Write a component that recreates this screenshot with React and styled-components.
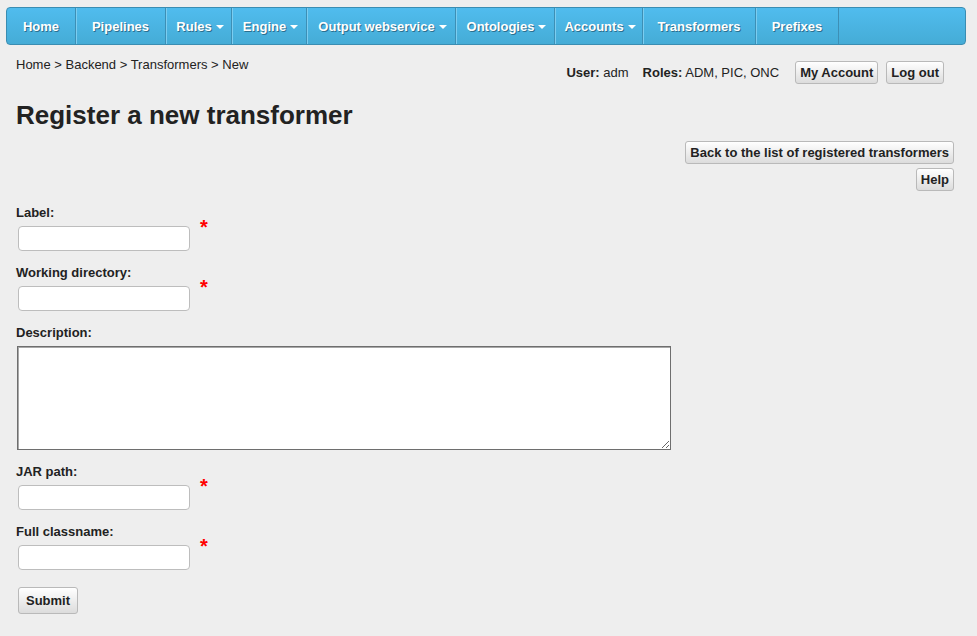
import styled, { createGlobalStyle } from 'styled-components';

const GlobalStyle = createGlobalStyle`
  body {
    margin: 0;
    background: #eeeeee;
    font-family: 'Liberation Sans', Arial, sans-serif;
    color: #222;
  }
`;

const NavBar = styled.nav`
  display: flex;
  height: 38px;
  margin: 7px 11px 0 6px;
  box-sizing: border-box;
  border: 1px solid #3a8db2;
  border-radius: 4px;
  background: linear-gradient(#50bcee, #45acd6);
  overflow: hidden;
`;

const NavItem = styled.div`
  display: flex;
  align-items: center;
  justify-content: center;
  gap: 4px;
  width: ${(p) => p.$w}px;
  box-sizing: border-box;
  padding-left: ${(p) => (p.$menu ? 3 : 0)}px;
  border-right: 1px solid #3d8fb5;
  box-shadow: inset 1px 0 0 #7ccdf0;
  font-size: 13px;
  font-weight: bold;
  color: #fff;
  text-shadow: 1px 1px 0 #2c6f8e;
  white-space: nowrap;
  &:first-child {
    box-shadow: none;
  }
`;

const Caret = styled.span`
  width: 0;
  height: 0;
  margin-top: 2px;
  border-left: 4px solid transparent;
  border-right: 4px solid transparent;
  border-top: 4px solid #fff;
`;

const Page = styled.div`
  padding: 0 23px 20px 16px;
`;

const TopRow = styled.div`
  display: flex;
  justify-content: space-between;
  align-items: flex-start;
  margin-top: 11px;
`;

const Breadcrumb = styled.div`
  padding-top: 1px;
  font-size: 13px;
  line-height: 15px;
`;

const UserBox = styled.div`
  display: flex;
  align-items: center;
  margin: 5px 10px 0 0;
  font-size: 13px;
`;

const Info = styled.span`
  margin-right: ${(p) => p.$gap}px;
  b {
    font-weight: bold;
  }
`;

const Button = styled.button`
  height: ${(p) => p.$h || 23}px;
  padding: 0 ${(p) => p.$pad || 4}px;
  margin-left: ${(p) => p.$ml || 0}px;
  margin-top: ${(p) => p.$mt || 0}px;
  box-sizing: border-box;
  border: 1px solid #b9b9b9;
  border-radius: 3px;
  background: linear-gradient(#ffffff, #dcdcdc);
  font-family: 'Liberation Sans', Arial, sans-serif;
  font-size: 13px;
  font-weight: bold;
  color: #222;
  cursor: pointer;
`;

const Title = styled.h1`
  margin: 17px 0 0;
  font-size: 26px;
  line-height: 28px;
  font-weight: bold;
`;

const Actions = styled.div`
  display: flex;
  flex-direction: column;
  align-items: flex-end;
  gap: 4px;
  margin-top: 12px;
`;

const Form = styled.form`
  margin-top: 14px;
`;

const Field = styled.div`
  margin-bottom: 14px;
`;

const Label = styled.label`
  display: block;
  margin-bottom: 6px;
  font-size: 13px;
  line-height: 15px;
  font-weight: bold;
`;

const InputRow = styled.div`
  display: flex;
  align-items: flex-start;
`;

const TextInput = styled.input`
  width: 172px;
  height: 25px;
  margin-left: 2px;
  box-sizing: border-box;
  border: 1px solid #bdbdbd;
  border-radius: 4px;
  background: #fff;
  outline: none;
`;

const Star = styled.span`
  margin: -7px 0 0 10px;
  color: #f00;
  font-size: 20px;
  line-height: 16px;
  font-weight: bold;
`;

const TextArea = styled.textarea`
  display: block;
  width: 654px;
  height: 104px;
  margin-left: 1px;
  box-sizing: border-box;
  border: 1px solid #6e6e6e;
  box-shadow: inset 1px 1px 0 #a8a8a8;
  background: #fff;
  outline: none;
`;

const menu = [
  { name: 'Home', w: 69 },
  { name: 'Pipelines', w: 90 },
  { name: 'Rules', w: 66, sub: true },
  { name: 'Engine', w: 75, sub: true },
  { name: 'Output webservice', w: 149, sub: true },
  { name: 'Ontologies', w: 99, sub: true },
  { name: 'Accounts', w: 88, sub: true },
  { name: 'Transformers', w: 113 },
  { name: 'Prefixes', w: 83 },
];

const fields = [
  { label: 'Label:', required: true },
  { label: 'Working directory:', required: true },
  { label: 'Description:', area: true },
  { label: 'JAR path:', required: true },
  { label: 'Full classname:', required: true },
];

export default function App() {
  return (
    <>
      <GlobalStyle />
      <NavBar>
        {menu.map((m) => (
          <NavItem key={m.name} $w={m.w} $menu={m.sub}>
            {m.name}
            {m.sub && <Caret />}
          </NavItem>
        ))}
      </NavBar>
      <Page>
        <TopRow>
          <Breadcrumb>Home &gt; Backend &gt; Transformers &gt; New</Breadcrumb>
          <UserBox>
            <Info $gap={14}>
              <b>User:</b> adm
            </Info>
            <Info $gap={16}>
              <b>Roles:</b> ADM, PIC, ONC
            </Info>
            <Button>My Account</Button>
            <Button $ml={8}>Log out</Button>
          </UserBox>
        </TopRow>
        <Title>Register a new transformer</Title>
        <Actions>
          <Button>Back to the list of registered transformers</Button>
          <Button>Help</Button>
        </Actions>
        <Form onSubmit={(e) => e.preventDefault()}>
          {fields.map((f) => (
            <Field key={f.label}>
              <Label>{f.label}</Label>
              {f.area ? (
                <TextArea />
              ) : (
                <InputRow>
                  <TextInput type="text" />
                  {f.required && <Star>*</Star>}
                </InputRow>
              )}
            </Field>
          ))}
          <Button type="submit" $h={27} $pad={7} $ml={2} $mt={3}>
            Submit
          </Button>
        </Form>
      </Page>
    </>
  );
}
